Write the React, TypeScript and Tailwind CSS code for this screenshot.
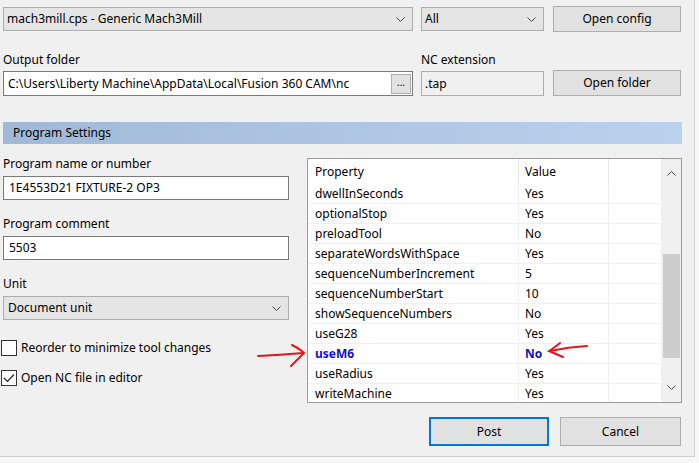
import React from "react"

const font = { fontFamily: '"Noto Sans", "Segoe UI", Arial, sans-serif' }

const Chevron = ({ up = false }: { up?: boolean }) => (
  <svg width="9" height="5" viewBox="0 0 9 5" className={up ? "rotate-180" : ""}>
    <path d="M0.5 0.5 L4.5 4.5 L8.5 0.5" fill="none" stroke="#444" strokeWidth="1" />
  </svg>
)

const Combo = ({ text, className }: { text: string; className: string }) => (
  <div
    className={`h-[24px] bg-[#e5e5e5] border border-[#adadad] flex items-center justify-between pl-[3px] pr-[7px] ${className}`}
  >
    <span>{text}</span>
    <Chevron />
  </div>
)

const Btn = ({ text, className = "" }: { text: string; className?: string }) => (
  <div
    className={`h-[26px] bg-[#e1e1e1] border border-[#adadad] flex items-center justify-center ${className}`}
  >
    {text}
  </div>
)

const rows: [string, string][] = [
  ["dwellInSeconds", "Yes"],
  ["optionalStop", "Yes"],
  ["preloadTool", "No"],
  ["separateWordsWithSpace", "Yes"],
  ["sequenceNumberIncrement", "5"],
  ["sequenceNumberStart", "10"],
  ["showSequenceNumbers", "No"],
  ["useG28", "Yes"],
  ["useM6", "No"],
  ["useRadius", "Yes"],
  ["writeMachine", "Yes"],
]

export default function App() {
  return (
    <div className="w-[699px] h-[463px] bg-[#f7f7f7] overflow-hidden text-[12px] text-black" style={font}>
      <div className="relative w-[695px] h-[457px] bg-[#f0f0f0] border-r border-b border-[#cfcfcf]">
        {/* top row */}
        <div className="flex items-start pt-[7px] pl-[3px]">
          <Combo text="mach3mill.cps - Generic Mach3Mill" className="w-[410px]" />
          <Combo text="All" className="w-[123px] ml-[8px]" />
          <Btn text="Open config" className="w-[128px] ml-[9px] -mt-[1px]" />
        </div>

        {/* output folder row */}
        <div className="flex items-end pl-[3px] mt-[20px]">
          <div className="w-[410px]">
            <div className="h-[16px] leading-[16px] mb-[3px]">Output folder</div>
            <div className="h-[25px] bg-white border border-[#7a7a7a] flex items-center justify-between pl-[4px] pr-[1px]">
              <span className="whitespace-nowrap">C:\Users\Liberty Machine\AppData\Local\Fusion 360 CAM\nc</span>
              <div className="w-[20px] h-[20px] bg-[#e1e1e1] border border-[#adadad] flex items-center justify-center text-[10px] leading-none pb-[4px]">
                ...
              </div>
            </div>
          </div>
          <div className="w-[123px] ml-[8px]">
            <div className="h-[16px] leading-[16px] mb-[3px]">NC extension</div>
            <div className="h-[25px] bg-[#f0f0f0] border border-[#adadad] flex items-center pl-[3px]">.tap</div>
          </div>
          <Btn text="Open folder" className="w-[128px] ml-[9px]" />
        </div>

        {/* section header */}
        <div className="ml-[3px] mt-[26px] w-[679px] h-[22px] bg-gradient-to-r from-[#a0b9d7] to-[#bad2ee] flex items-center pl-[10px]">
          Program Settings
        </div>

        {/* body */}
        <div className="flex pl-[3px] mt-[12px]">
          <div className="w-[286px] flex flex-col">
            <div className="h-[16px] leading-[16px]">Program name or number</div>
            <div className="h-[24px] mt-[4px] bg-white border border-[#7a7a7a] flex items-center pl-[5px]">1E4553D21 FIXTURE-2 OP3</div>
            <div className="h-[16px] leading-[16px] mt-[16px]">Program comment</div>
            <div className="h-[24px] mt-[4px] bg-white border border-[#7a7a7a] flex items-center pl-[5px]">5503</div>
            <div className="h-[16px] leading-[16px] mt-[16px]">Unit</div>
            <Combo text="Document unit" className="mt-[4px] pl-[4px]" />
            <div className="flex items-center h-[16px] leading-[16px] -ml-[2px] mt-[20px]">
              <div className="w-[16px] h-[16px] bg-white border border-[#333]" />
              <span className="ml-[4px]">Reorder to minimize tool changes</span>
            </div>
            <div className="flex items-center h-[16px] leading-[16px] -ml-[2px] mt-[14px]">
              <div className="w-[16px] h-[16px] bg-white border border-[#333] flex items-center justify-center">
                <svg width="12" height="10" viewBox="0 0 12 10">
                  <path d="M1 5 L4.5 8.5 L11 1.5" fill="none" stroke="#222" strokeWidth="1.2" />
                </svg>
              </div>
              <span className="ml-[4px]">Open NC file in editor</span>
            </div>
          </div>

          {/* property grid */}
          <div className="ml-[18px] mt-[2px] w-[375px] h-[245px] bg-white border border-[#9a9a9a] flex overflow-hidden">
            <div className="flex-1 flex flex-col">
              <div className="flex h-[25px] items-center shrink-0">
                <div className="w-[211px] pl-[7px] h-full flex items-center border-r border-[#e5e5e5]">Property</div>
                <div className="w-[90px] pl-[6px] h-full flex items-center border-r border-[#e5e5e5]">Value</div>
                <div className="flex-1" />
              </div>
              {rows.map(([k, v]) => {
                const hl = k === "useM6"
                return (
                  <div key={k} className="flex h-[20px] shrink-0 border-b border-[#f0f0f0]">
                    <div className={`w-[211px] pl-[7px] flex items-center border-r border-[#f0f0f0] ${hl ? "font-bold text-[#1010c8]" : ""}`}>
                      {k}
                    </div>
                    <div className={`w-[90px] pl-[6px] flex items-center border-r border-[#f0f0f0] ${hl ? "font-bold text-[#1010c8]" : ""}`}>
                      {v}
                    </div>
                    <div className="flex-1" />
                  </div>
                )
              })}
            </div>
            <div className="w-[20px] bg-[#f0f0f0] flex flex-col items-center">
              <div className="h-[17px] flex items-center justify-center mt-[6px]">
                <Chevron up />
              </div>
              <div className="w-[17px] h-[104px] bg-[#cdcdcd] mt-[72px]" />
              <div className="flex-1" />
              <div className="h-[17px] flex items-center justify-center mb-[6px]">
                <Chevron />
              </div>
            </div>
          </div>
        </div>

        {/* buttons */}
        <div className="flex justify-end pr-[13px] mt-[14px]">
          <div className="w-[120px] h-[29px] bg-[#e1e1e1] border-2 border-[#0078d7] flex items-center justify-center">Post</div>
          <div className="w-[121px] h-[29px] ml-[11px] bg-[#e1e1e1] border border-[#adadad] flex items-center justify-center">Cancel</div>
        </div>

        {/* red annotation arrows */}
        <svg className="absolute left-0 top-0 pointer-events-none" width="699" height="463">
          <path d="M258 356 Q280 355 303 353" fill="none" stroke="#e8141a" strokeWidth="2" strokeLinecap="round" />
          <path d="M292 345 Q300 349 304 353 Q298 359 291 366" fill="none" stroke="#e8141a" strokeWidth="2" strokeLinecap="round" />
          <path d="M587 346 Q568 347 550 351" fill="none" stroke="#e8141a" strokeWidth="2" strokeLinecap="round" />
          <path d="M560 343 Q554 348 549 351 Q556 354 563 357" fill="none" stroke="#e8141a" strokeWidth="2" strokeLinecap="round" />
        </svg>
      </div>
    </div>
  )
}
